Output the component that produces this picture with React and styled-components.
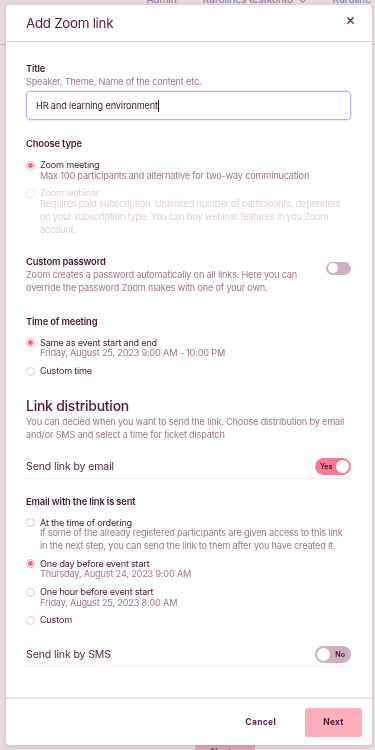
import React from "react";
import styled, { createGlobalStyle } from "styled-components";

const Global = createGlobalStyle`
  html, body { margin: 0; padding: 0; height: 100%; }
  body { font-family: Inter, "Noto Sans", "Liberation Sans", sans-serif; background: #ffffff; overflow: hidden; }
  * { box-sizing: border-box; }
`;

const plum = "#4a1636";
const mauve = "#a27690";
const faint = "#e2d0da";

/* dimmed page behind the dialog */
const Page = styled.div`
  height: 750px;
  display: flex;
  flex-direction: column;
  justify-content: space-between;
  background: #fbf9fa;
`;
const TopBar = styled.div`
  height: 52px;
  margin-top: -7px;
  border-bottom: 1px solid #d9d2d6;
  display: flex;
  justify-content: flex-end;
  gap: 26px;
  padding: 0 4px;
  font-size: 10px;
  color: #8c8590;
  line-height: 12px;
`;
const BottomBar = styled.div`
  display: flex;
  justify-content: center;
  margin-bottom: -10px;
`;
const BgButton = styled.div`
  width: 60px;
  height: 16px;
  margin-left: 75px;
  background: #f3b8c4;
  color: #6c4a5c;
  font-size: 9px;
  font-weight: 600;
  padding-top: 2px;
  text-align: center;
`;

const Overlay = styled.div`
  position: fixed;
  inset: 0;
  background: rgba(110, 45, 85, 0.15);
  display: flex;
  padding: 5px 3px 5px 6px;
`;
const Modal = styled.div`
  flex: 1;
  background: #fff;
  border-radius: 4px;
  box-shadow: 0 1px 4px rgba(60, 20, 40, 0.15);
  display: flex;
  flex-direction: column;
  overflow: hidden;
`;
const Header = styled.div`
  height: 37px;
  flex: none;
  border-bottom: 1px solid #dcd7da;
  display: flex;
  align-items: center;
  justify-content: space-between;
  padding: 0 17px 0 20px;
`;
const HeaderTitle = styled.h1`
  margin: 0;
  font-size: 13.4px;
  font-weight: 400;
  color: #561c40;
  letter-spacing: -0.3px;
`;
const Close = styled.button`
  border: 0;
  background: none;
  padding: 0;
  width: 10px;
  height: 10px;
  display: flex;
  align-items: center;
  justify-content: center;
  margin-bottom: 5px;
`;
const Body = styled.div`
  flex: 1;
  overflow: hidden;
  padding: 20px 21px 0 20px;
  display: flex;
  flex-direction: column;
`;
const Footer = styled.div`
  flex: none;
  height: 48px;
  border-top: 2px solid #e9e6e8;
  display: flex;
  align-items: center;
  justify-content: flex-end;
  gap: 29px;
  padding: 0 10px 0 0;
`;
const TextButton = styled.button`
  border: 0;
  background: none;
  font-family: inherit;
  font-size: 8.5px;
  font-weight: 700;
  letter-spacing: 0.3px;
  color: #5a2a48;
  padding: 0;
`;
const PrimaryButton = styled.button`
  border: 0;
  width: 57px;
  height: 29px;
  border-radius: 3px;
  background: #ffafbc;
  font-family: inherit;
  font-size: 8.5px;
  font-weight: 700;
  letter-spacing: 0.2px;
  color: #4a1a38;
`;

const Section = styled.div`
  margin-top: ${(p) => p.$mt || 0}px;
  display: flex;
  flex-direction: column;
`;
const Label = styled.div`
  font-size: 9.4px;
  line-height: 13px;
  font-weight: 600;
  letter-spacing: -0.15px;
  color: ${plum};
`;
const Desc = styled.div`
  font-size: 9.2px;
  line-height: 13.2px;
  letter-spacing: -0.2px;
  color: ${(p) => (p.$disabled ? faint : mauve)};
`;
const InputField = styled.div`
  margin-top: 3px;
  height: 29px;
  border: 1.5px solid #b8b4f2;
  border-radius: 4px;
  box-shadow: 0 0 0 1px rgba(184, 180, 242, 0.25);
  display: flex;
  align-items: center;
  padding: 0 9px;
  font-size: 9.2px;
  letter-spacing: -0.15px;
  color: #3a1a2c;
`;
const Caret = styled.span`
  display: inline-block;
  width: 1px;
  height: 12px;
  background: #3a1a2c;
  margin-left: 0.5px;
`;
const RadioList = styled.div`
  margin-top: 10px;
  display: flex;
  flex-direction: column;
  gap: 6.5px;
`;
const RadioItem = styled.div`
  display: grid;
  grid-template-columns: 9px 1fr;
  column-gap: 5px;
  align-items: center;
`;
const RadioDot = styled.span`
  width: 9px;
  height: 9px;
  border-radius: 50%;
  border: 1px solid ${(p) => (p.$checked ? "#f7a9b7" : p.$disabled ? "#efe6eb" : "#d9cbd3")};
  background: #fff;
  display: flex;
  align-items: center;
  justify-content: center;
  &::after {
    content: "";
    width: 5px;
    height: 5px;
    border-radius: 50%;
    background: ${(p) => (p.$checked ? "#f3677f" : "transparent")};
  }
`;
const RadioLabel = styled.div`
  font-size: 9.1px;
  line-height: 10px;
  letter-spacing: -0.2px;
  color: ${(p) => (p.$disabled ? faint : plum)};
`;
const RadioDesc = styled(Desc)`
  grid-column: 2;
  margin-top: -1.5px;
`;
const SwitchRow = styled.div`
  display: flex;
  justify-content: space-between;
  align-items: ${(p) => (p.$top ? "flex-start" : "center")};
  gap: 12px;
  margin-top: ${(p) => p.$mt || 0}px;
  padding-bottom: ${(p) => p.$pb || 0}px;
  border-bottom: ${(p) => (p.$divider ? "1px solid #f1ecef" : "0")};
`;
const BigHeading = styled.h2`
  margin: 0;
  font-size: 14px;
  line-height: 19px;
  font-weight: 500;
  letter-spacing: -0.25px;
  color: #4e1a3b;
`;
const RowLabel = styled.div`
  font-size: 10.5px;
  letter-spacing: -0.1px;
  color: #5a2448;
`;
const SmallToggle = styled.span`
  flex: none;
  width: 25px;
  height: 13px;
  border-radius: 7px;
  background: #cdb0c2;
  margin-top: 7px;
  display: flex;
  align-items: center;
  padding: 0 2px;
  &::before {
    content: "";
    width: 10px;
    height: 10px;
    border-radius: 50%;
    background: #fff;
  }
`;
const Toggle = styled.span`
  flex: none;
  width: 36px;
  height: 17px;
  border-radius: 9px;
  background: ${(p) => (p.$on ? "#f97b93" : "#ccb1c1")};
  display: flex;
  flex-direction: ${(p) => (p.$on ? "row" : "row-reverse")};
  align-items: center;
  justify-content: space-between;
  padding-left: ${(p) => (p.$on ? 5 : 2)}px;
  padding-right: ${(p) => (p.$on ? 2 : 6)}px;
  font-size: 7px;
  font-weight: 700;
  color: #4a1a38;
  &::after {
    content: "";
    width: 13px;
    height: 13px;
    border-radius: 50%;
    background: #fff;
  }
`;

function Radio({ checked, disabled, label, desc }) {
  return (
    <RadioItem>
      <RadioDot $checked={checked} $disabled={disabled} />
      <RadioLabel $disabled={disabled}>{label}</RadioLabel>
      {desc && <RadioDesc $disabled={disabled}>{desc}</RadioDesc>}
    </RadioItem>
  );
}

export default function App() {
  return (
    <>
      <Global />
      <Page>
        <TopBar>
          <span>Admin</span>
          <span>Karolines testkonto &nbsp;⌄</span>
          <span>Karoline</span>
        </TopBar>
        <BottomBar>
          <BgButton>Next &nbsp;›</BgButton>
        </BottomBar>
      </Page>
      <Overlay>
        <Modal>
          <Header>
            <HeaderTitle>Add Zoom link</HeaderTitle>
            <Close aria-label="Close">
              <svg width="7" height="7" viewBox="0 0 7 7">
                <path d="M0.8 0.8 L6.2 6.2 M6.2 0.8 L0.8 6.2" stroke="#6b3858" strokeWidth="1.4" strokeLinecap="round" />
              </svg>
            </Close>
          </Header>
          <Body>
            <Section>
              <Label>Title</Label>
              <Desc>Speaker, Theme, Name of the content etc.</Desc>
              <InputField>
                HR and learning environment<Caret />
              </InputField>
            </Section>

            <Section $mt={17}>
              <Label>Choose type</Label>
              <RadioList>
                <Radio checked label="Zoom meeting" desc="Max 100 participants and alternative for two-way comminucation" />
                <Radio
                  disabled
                  label="Zoom webinar"
                  desc="Requires paid subscription. Unlimited number of participants, dependent on your subscription type. You can buy webinar features in you Zoom account."
                />
              </RadioList>
            </Section>

            <Section $mt={18}>
              <SwitchRow $top>
                <div>
                  <Label>Custom password</Label>
                  <Desc>
                    Zoom creates a password automatically on all links. Here you can override the password Zoom makes with one of your own.
                  </Desc>
                </div>
                <SmallToggle />
              </SwitchRow>
            </Section>

            <Section $mt={21}>
              <Label>Time of meeting</Label>
              <RadioList>
                <Radio checked label="Same as event start and end" desc="Friday, August 25, 2023 9:00 AM - 10:00 PM" />
                <Radio label="Custom time" />
              </RadioList>
            </Section>

            <Section $mt={20}>
              <BigHeading>Link distribution</BigHeading>
              <Desc>
                You can decied when you want to send the link. Choose distribution by email and/or SMS and select a time for ticket dispatch
              </Desc>
              <SwitchRow $mt={16} $pb={3} $divider>
                <RowLabel>Send link by email</RowLabel>
                <Toggle $on>Yes</Toggle>
              </SwitchRow>
            </Section>

            <Section $mt={16}>
              <Label>Email with the link is sent</Label>
              <RadioList>
                <Radio
                  label="At the time of ordering"
                  desc="If some of the already registered participants are given access to this link in the next step, you can send the link to them after you have created it."
                />
                <Radio checked label="One day before event start" desc="Thursday, August 24, 2023 9:00 AM" />
                <Radio label="One hour before event start" desc="Friday, August 25, 2023 8:00 AM" />
                <Radio label="Custom" />
              </RadioList>
            </Section>

            <SwitchRow $mt={21} $pb={3} $divider>
              <RowLabel>Send link by SMS</RowLabel>
              <Toggle>No</Toggle>
            </SwitchRow>
          </Body>
          <Footer>
            <TextButton>Cancel</TextButton>
            <PrimaryButton>Next</PrimaryButton>
          </Footer>
        </Modal>
      </Overlay>
    </>
  );
}
